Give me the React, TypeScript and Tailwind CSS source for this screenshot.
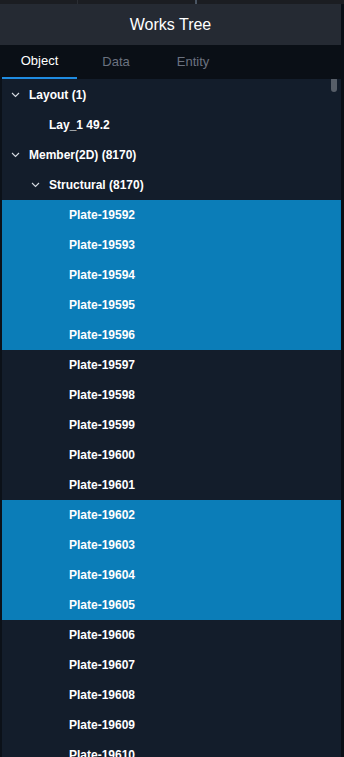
const rows: { label: string; depth: number; caret?: boolean; selected?: boolean }[] = [
  { label: "Layout (1)", depth: 0, caret: true },
  { label: "Lay_1 49.2", depth: 1 },
  { label: "Member(2D) (8170)", depth: 0, caret: true },
  { label: "Structural (8170)", depth: 1, caret: true },
];

const selectedPlates = [19592, 19593, 19594, 19595, 19596, 19602, 19603, 19604, 19605];
for (let n = 19592; n <= 19610; n++) {
  rows.push({ label: `Plate-${n}`, depth: 2, selected: selectedPlates.includes(n) });
}

function Caret() {
  return (
    <svg width="9" height="6" viewBox="0 0 9 6" className="shrink-0">
      <path d="M1 1 L4.5 4.5 L8 1" fill="none" stroke="#d6dbe2" strokeWidth="1.1" />
    </svg>
  );
}

export default function App() {
  return (
    <div
      className="w-[344px] h-[757px] overflow-hidden flex flex-col bg-[#0b1119]"
      style={{ fontFamily: '"Liberation Sans", Arial, sans-serif' }}
    >
      <div className="h-[4px] shrink-0 bg-[#1b1d22] flex">
        <div className="w-[78px] border-r border-[#2a2d33]" />
        <div className="ml-[117px] w-[2px] bg-[#4a5563]" />
      </div>
      <div className="h-[41px] shrink-0 flex">
        <div className="flex-1 bg-[#252a33] flex items-center justify-center text-white text-[16px]">
          Works Tree
        </div>
        <div className="w-[3px] bg-[#0a0f16]" />
      </div>
      <div className="h-[34px] shrink-0 flex items-stretch pl-[2px] text-[13px] bg-[#0a0f16]">
        <div className="w-[75px] flex items-center justify-center text-white border-b-2 border-[#1f8be0]">Object</div>
        <div className="w-[78px] flex items-center justify-center text-[#6b7280]">Data</div>
        <div className="w-[76px] flex items-center justify-center text-[#6b7280]">Entity</div>
      </div>
      <div className="flex-1 flex min-h-0">
        <div className="w-[2px] bg-[#0b1119]" />
        <div className="flex-1 relative bg-[#131d2b] overflow-hidden">
          <div className="absolute right-[4px] top-[-2px] w-[6px] h-[15px] rounded-[3px] bg-[#575e68]" />
          <div className="pt-[1px]">
            {rows.map((r) => (
              <div
                key={r.label}
                className={`h-[30px] flex items-center text-[12px] font-bold text-white ${r.selected ? "bg-[#0b7db8]" : ""}`}
              >
                <div className={r.depth === 0 ? "w-[27px] pl-[9px]" : r.depth === 1 ? "w-[47px] pl-[29px]" : "w-[67px]"}>
                  {r.caret && <Caret />}
                </div>
                <span>{r.label}</span>
              </div>
            ))}
          </div>
        </div>
        <div className="w-[3px] bg-[#0a0f16]" />
      </div>
    </div>
  );
}
